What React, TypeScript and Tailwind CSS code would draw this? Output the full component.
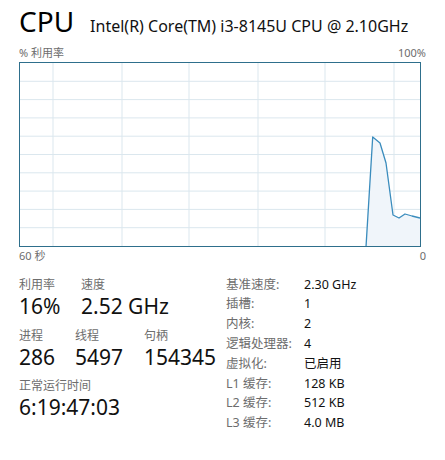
import React from 'react';

const FONT = { fontFamily: '"Noto Sans", "Noto Sans CJK SC", sans-serif' };

// grid positions inside the 400x183 plot
const V_LINES = [33, 102, 169, 238, 305, 374];
const H_LINES = [1, 2, 3, 4, 5, 6, 7, 8, 9].map((i) => i * 18.3);

const POINTS: [number, number][] = [
  [346, 184],
  [352.7, 74],
  [360, 80],
  [366, 100],
  [373, 152],
  [379, 155],
  [385, 151],
  [392, 153],
  [400, 155],
];

function UsageChart() {
  const line = POINTS.map(([x, y]) => `${x},${y}`).join(' ');
  const area = `${line} 400,183 346,183`;
  return (
    <div className="w-[402px] h-[185px] border border-[#2e6f8c] bg-white">
      <svg width="400" height="183" viewBox="0 0 400 183" className="block">
        {H_LINES.map((y) => (
          <line key={'h' + y} x1="0" x2="400" y1={y} y2={y} stroke="#dbe7ee" strokeWidth="1" />
        ))}
        {V_LINES.map((x) => (
          <line key={'v' + x} x1={x} x2={x} y1="0" y2="183" stroke="#dbe7ee" strokeWidth="1" />
        ))}
        <polygon points={area} fill="#f0f5fa" />
        <polyline points={line} fill="none" stroke="#3a8cbd" strokeWidth="1.3" strokeLinejoin="round" />
      </svg>
    </div>
  );
}

function Stat({ label, value, className }: { label: string; value: string; className?: string }) {
  return (
    <div className={className}>
      <div className="text-[12px] leading-[16px] text-[#6d6d6d]">{label}</div>
      <div className="text-[21px] leading-[26px] text-[#111]">{value}</div>
    </div>
  );
}

const DETAILS = [
  ['基准速度:', '2.30 GHz'],
  ['插槽:', '1'],
  ['内核:', '2'],
  ['逻辑处理器:', '4'],
  ['虚拟化:', '已启用'],
  ['L1 缓存:', '128 KB'],
  ['L2 缓存:', '512 KB'],
  ['L3 缓存:', '4.0 MB'],
];

export default function App() {
  return (
    <div className="w-[445px] h-[460px] bg-white px-[19px] overflow-hidden" style={FONT}>
      {/* header */}
      <div className="flex items-baseline pt-[2px] h-[44px]">
        <span className="text-[28px] leading-[38px] text-black">CPU</span>
        <span className="ml-[16px] text-[16px] text-[#111]">Intel(R) Core(TM) i3-8145U CPU @ 2.10GHz</span>
      </div>

      <div className="flex justify-between text-[11px] leading-[18px] text-[#6d6d6d]">
        <span>% 利用率</span>
        <span>100%</span>
      </div>

      <UsageChart />

      <div className="flex justify-between text-[11px] leading-[18px] text-[#6d6d6d]">
        <span>60 秒</span>
        <span>0</span>
      </div>

      {/* stats */}
      <div className="flex mt-[12px]">
        <div className="w-[207px]">
          <div className="flex">
            <Stat label="利用率" value="16%" className="w-[62px]" />
            <Stat label="速度" value="2.52 GHz" />
          </div>
          <div className="flex mt-[9px]">
            <Stat label="进程" value="286" className="w-[56px]" />
            <Stat label="线程" value="5497" className="w-[69px]" />
            <Stat label="句柄" value="154345" />
          </div>
          <Stat label="正常运行时间" value="6:19:47:03" className="mt-[8px]" />
        </div>

        <div className="flex flex-col -mt-[2px]">
          {DETAILS.map(([k, v]) => (
            <div key={k} className="flex h-[19.8px] items-center text-[12.5px]">
              <span className="w-[78px] text-[#6d6d6d]">{k}</span>
              <span className="text-[#111]">{v}</span>
            </div>
          ))}
        </div>
      </div>
    </div>
  );
}
